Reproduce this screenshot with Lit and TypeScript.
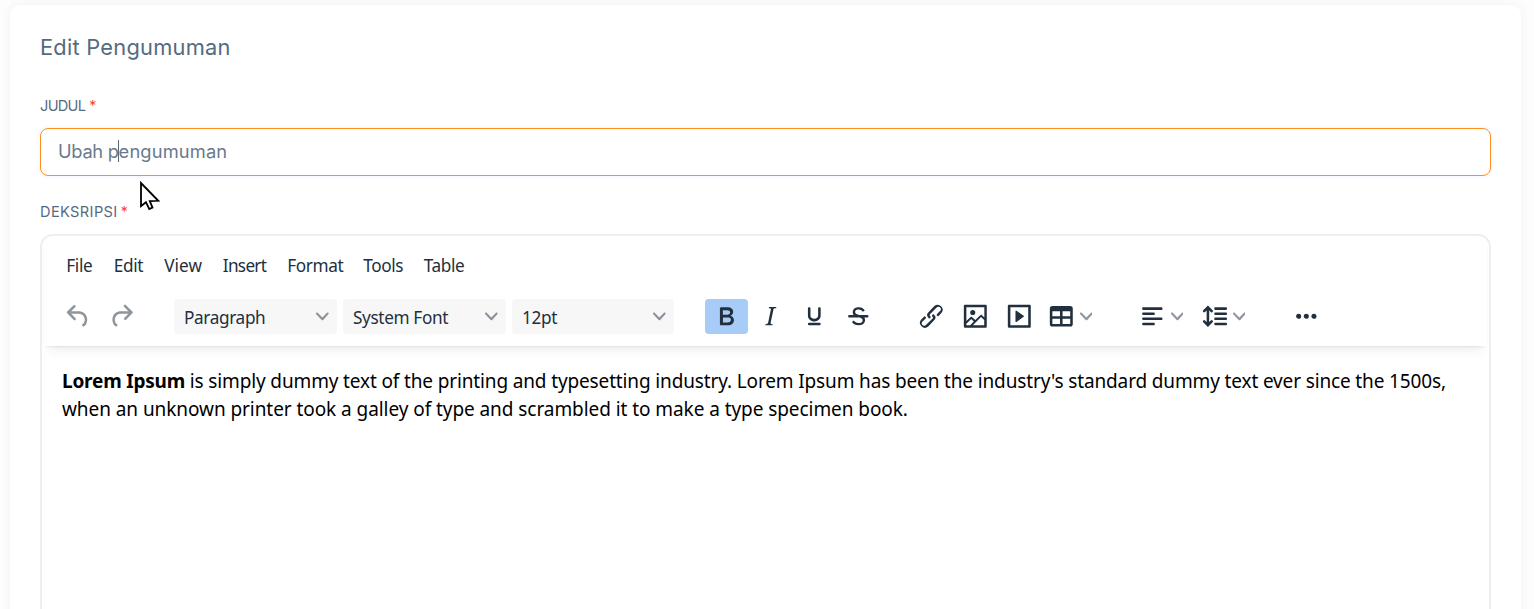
import { LitElement, html, css, svg } from "lit";
import { customElement } from "lit/decorators.js";

const paths: Record<string, string> = {
  undo: "M6.4 8H12c3.7 0 6.2 2 6.8 5.1.6 2.7-.4 5.6-2.3 6.8a1 1 0 0 1-1-1.8c1.1-.6 1.8-2.7 1.4-4.6-.5-2.1-2.1-3.5-4.9-3.5H6.4l3.3 3.3a1 1 0 1 1-1.4 1.4l-5-5a1 1 0 0 1 0-1.4l5-5a1 1 0 0 1 1.4 1.4L6.4 8Z",
  redo: "M17.6 10H12c-2.8 0-4.4 1.4-4.9 3.5-.4 2 .3 4 1.4 4.6a1 1 0 1 1-1 1.8c-2-1.2-2.9-4.1-2.3-6.8.6-3 3-5.1 6.8-5.1h5.6l-3.3-3.3a1 1 0 1 1 1.4-1.4l5 5a1 1 0 0 1 0 1.4l-5 5a1 1 0 0 1-1.4-1.4l3.3-3.3Z",
  bold: "M7.8 19c-.3 0-.5 0-.6-.2l-.2-.5V5.7c0-.2 0-.4.2-.5l.6-.2h5c1.5 0 2.7.3 3.5 1 .7.6 1.1 1.4 1.1 2.5a3 3 0 0 1-.6 1.9c-.4.6-1 1-1.6 1.2.4.1.9.3 1.3.6s.8.7 1 1.2c.4.4.5 1 .5 1.6 0 1.3-.4 2.3-1.3 3-.8.7-2.1 1-3.8 1H7.8Zm5-8.3c.6 0 1.2-.1 1.6-.5.4-.3.6-.7.6-1.3 0-1.1-.8-1.7-2.3-1.7H9.3v3.5h3.4Zm.5 6c.7 0 1.3-.1 1.7-.4.4-.4.6-.9.6-1.5s-.2-1-.7-1.4c-.4-.3-1-.4-2-.4H9.4v3.8h4Z",
  italic: "m16.7 4.7-.1.9h-.3c-.6 0-1 0-1.4.3-.3.3-.4.6-.5 1.1l-2.1 9.8v.6c0 .5.4.8 1.4.8h.2l-.2.8H8l.2-.8h.2c1.1 0 1.8-.5 2-1.5l2-9.8.1-.5c0-.6-.4-.8-1.4-.8h-.3l.2-.9h5.8Z",
  underline: "M16 5c.6 0 1 .4 1 1v5.5a4 4 0 0 1-.4 1.8l-1 1.4a5.3 5.3 0 0 1-5.5 1 5 5 0 0 1-1.6-1c-.5-.4-.8-.9-1.1-1.4a4 4 0 0 1-.4-1.8V6c0-.6.4-1 1-1s1 .4 1 1v5.5c0 .3 0 .6.2 1l.6.7a3.3 3.3 0 0 0 2.2.8 3.4 3.4 0 0 0 2.2-.8c.3-.2.4-.5.6-.8l.2-.9V6c0-.6.4-1 1-1ZM8 17h8c.6 0 1 .4 1 1s-.4 1-1 1H8a1 1 0 0 1 0-2Z",
  strike: "M15.6 8.5c-.5-.7-1-1.1-1.3-1.3-.6-.4-1.3-.6-2-.6-2.7 0-2.8 1.7-2.8 2.1 0 1.6 1.8 2 3.2 2.3 4.4.9 4.6 2.8 4.6 3.9 0 1.4-.7 4.1-5 4.1A6.2 6.2 0 0 1 7 16.4l1.5-1.1c.4.6 1.6 2 3.7 2 1.6 0 2.5-.4 3-1.2.4-.8.3-2-.8-2.6-.7-.4-1.6-.7-2.9-1-1-.2-3.9-.8-3.9-3.6C7.6 6 10.3 5 12.4 5c2.9 0 4.2 1.6 4.7 2.4l-1.5 1.1ZM5 11h14a1 1 0 0 1 0 2H5a1 1 0 0 1 0-2Z",
  link: "M6.2 12.3a1 1 0 0 1 1.4 1.4l-2 2a2 2 0 1 0 2.6 2.8l4.8-4.8a1 1 0 0 0 0-1.4 1 1 0 1 1 1.4-1.3 2.9 2.9 0 0 1 0 4L9.6 20a3.9 3.9 0 0 1-5.5-5.5l2-2Zm11.6-.6a1 1 0 0 1-1.4-1.4l2-2a2 2 0 1 0-2.6-2.8L11 10.3a1 1 0 0 0 0 1.4A1 1 0 1 1 9.6 13a2.9 2.9 0 0 1 0-4L14.4 4a3.9 3.9 0 0 1 5.5 5.5l-2 2Z",
  image: "m5 15.7 3.3-3.2c.3-.3.7-.3 1 0L12 15l4.1-4c.3-.4.8-.4 1 0l2 1.9V5H5v10.7ZM5 18V19h3l2.8-2.9-2-2L5 17.9Zm14-3-2.5-2.4-6.4 6.5H19v-4ZM4 3h16c.6 0 1 .4 1 1v16c0 .6-.4 1-1 1H4a1 1 0 0 1-1-1V4c0-.6.4-1 1-1Zm6 8a2 2 0 1 0 0-4 2 2 0 0 0 0 4Z",
  embed: "M4 3h16c.6 0 1 .4 1 1v16c0 .6-.4 1-1 1H4a1 1 0 0 1-1-1V4c0-.6.4-1 1-1Zm1 2v14h14V5H5Zm4.8 2.6 5.6 4a.5.5 0 0 1 0 .8l-5.6 4A.5.5 0 0 1 9 16V8a.5.5 0 0 1 .8-.4Z",
  table: "M19 4a2 2 0 0 1 2 2v12a2 2 0 0 1-2 2H5a2 2 0 0 1-2-2V6c0-1.1.9-2 2-2h14ZM5 14v4h6v-4H5Zm14 0h-6v4h6v-4Zm0-6h-6v4h6V8ZM5 12h6V8H5v4Z",
  align: "M5 5h14c.6 0 1 .4 1 1s-.4 1-1 1H5a1 1 0 1 1 0-2Zm0 4h8c.6 0 1 .4 1 1s-.4 1-1 1H5a1 1 0 1 1 0-2Zm0 8h8c.6 0 1 .4 1 1s-.4 1-1 1H5a1 1 0 0 1 0-2Zm0-4h14c.6 0 1 .4 1 1s-.4 1-1 1H5a1 1 0 0 1 0-2Z",
  lineHeight: "M21 5a1 1 0 0 1 .1 2H13a1 1 0 0 1-.1-2H21zm0 4a1 1 0 0 1 .1 2H13a1 1 0 0 1-.1-2H21zm0 4a1 1 0 0 1 .1 2H13a1 1 0 0 1-.1-2H21zm0 4a1 1 0 0 1 .1 2H13a1 1 0 0 1-.1-2H21zM7 3.6l3.7 3.7a1 1 0 0 1-1.3 1.5h-.1L8 7.3v9.2l1.3-1.3a1 1 0 0 1 1.3 0h.1c.4.4.4 1 0 1.3v.1L7 20.4l-3.7-3.7a1 1 0 0 1 1.3-1.5h.1L6 16.7V7.4L4.7 8.7a1 1 0 0 1-1.3 0h-.1a1 1 0 0 1 0-1.3v-.1L7 3.6z",
  more: "M6 10a2 2 0 0 0-2 2c0 1.1.9 2 2 2a2 2 0 0 0 2-2 2 2 0 0 0-2-2Zm12 0a2 2 0 0 0-2 2c0 1.1.9 2 2 2a2 2 0 0 0 2-2 2 2 0 0 0-2-2Zm-6 0a2 2 0 0 0-2 2c0 1.1.9 2 2 2a2 2 0 0 0 2-2 2 2 0 0 0-2-2Z",
};

const icon = (name: string) =>
  html`<svg class="icon" viewBox="0 0 24 24">${svg`<path fill-rule=${name === "strike" ? "nonzero" : "evenodd"} d=${paths[name]}></path>`}</svg>`;

const chevron = () =>
  html`<svg class="chevron" viewBox="0 0 10 10"><path d="M8.7 2.2c.3-.3.8-.3 1 0 .4.4.4.9 0 1.2L5.7 7.8c-.3.3-.9.3-1.2 0L.2 3.4a.8.8 0 0 1 0-1.2c.3-.3.8-.3 1.1 0L5 6l3.7-3.8Z"></path></svg>`;

const menus = ["File", "Edit", "View", "Insert", "Format", "Tools", "Table"];
const selects = ["Paragraph", "System Font", "12pt"];

@customElement("app-root")
export class AppRoot extends LitElement {
  static styles = css`
    :host { display: block; height: 609px; overflow: hidden; background: #fdfdfd; position: relative; }
    * { box-sizing: border-box; }
    .card { margin: 5px 13px 0 10px; height: 640px; padding: 28px 30px 0; background: #fff; border-radius: 10px;
      box-shadow: 0 0 10px rgba(67, 89, 113, .07); font-family: Inter, sans-serif; color: #566a7f; }
    h1 { margin: 0; font-size: 21.8px; line-height: 28px; font-weight: 400; letter-spacing: .26px; }
    label { display: flex; font-size: 14.6px; line-height: 20px; white-space: nowrap; }
    .judul { margin-top: 35px; letter-spacing: -.7px; }
    .judul .star { margin-left: 4px; }
    .deskripsi { margin-top: 26px; letter-spacing: .38px; }
    .deskripsi .star { margin-left: 3px; }
    .star { color: #ff3e1d; letter-spacing: 0; font-size: 14px; }
    .input { margin-top: 12px; height: 48px; border: 1px solid #fd8f1e; border-radius: 8px; padding: 0 17px 2px;
      display: flex; align-items: center; font-size: 18.3px; color: #697a8d; white-space: pre; letter-spacing: -.05px;
      box-shadow: 0 0 4px rgba(105, 108, 255, .1); }
    .caret { width: 1px; height: 22px; margin: 0 0 0 -1px; background: #566a7f; }
    .first { letter-spacing: -.3px; }
    .rest { letter-spacing: .14px; }
    .editor { margin-top: 12px; height: 460px; border: 2px solid #eee; border-radius: 13px; overflow: hidden;
      font-family: "Noto Sans", "Open Sans", sans-serif; color: #222f3e; }
    .head { height: 110px; margin: 0 2px; box-shadow: 0 2px 3px -2px rgba(34, 47, 62, .16), 0 8px 11px -5px rgba(34, 47, 62, .09); }
    .menu { display: grid; grid-template-columns: 47.5px 50.5px 58.5px 64.5px 76px 60.5px 60px; padding: 16px 0 0 22.3px;
      height: 46px; line-height: 28px; font-size: 17.2px; letter-spacing: -.38px; }
    .menu .wide { letter-spacing: 0; }
    .menu .tight { letter-spacing: -.7px; }
    .bar { display: flex; align-items: center; height: 35px; margin-top: 17px; padding-left: 13px; }
    .group { display: flex; align-items: center; margin-right: 30px; }
    .group.history, .group.selects { margin-right: 31px; }
    .group.selects { gap: 6px; }
    .group.marks, .group.media { gap: 1px; }
    .group.media { margin-right: 4.5px; }
    .btn { width: 43px; height: 35px; flex: none; display: flex; align-items: center; justify-content: center; border-radius: 4px; }
    .btn.on { background: #a6ccf7; }
    .btn.dim { opacity: .5; }
    .split { display: flex; align-items: center; gap: 3.5px; }
    .split.table { margin-right: 44.3px; }
    .split.align { margin-right: 15.2px; }
    .split.height { margin-right: 46px; }
    .icon { width: 30.6px; height: 30.6px; fill: #222f3e; flex: none; }
    .chevron { width: 12.7px; height: 12.7px; fill: #222f3e; opacity: .5; flex: none; }
    .select { width: 163px; height: 35px; padding: 0 8.5px 0 10px; background: #f7f7f7; border-radius: 4px;
      display: flex; align-items: center; justify-content: space-between; font-size: 17.2px; letter-spacing: -.36px; }
    .select:last-child { width: 162px; padding-right: 8px; }
    .select span { padding-top: 1px; }
    .body { padding: 21px 20px 0; font-size: 19px; line-height: 28px; color: #000; white-space: pre; }
    .body b { letter-spacing: -.2px; }
    .body .one { letter-spacing: -.14px; }
    .body .two { letter-spacing: -.066px; }
    .cursor { position: absolute; left: 139px; top: 180px; width: 24px; height: 32px; }
  `;

  render() {
    return html`
      <div class="card">
        <h1>Edit Pengumuman</h1>
        <label class="judul">JUDUL<span class="star">*</span></label>
        <div class="input"><span class="first">Ubah p</span><i class="caret"></i><span class="rest">engumuman</span></div>
        <label class="deskripsi">DEKSRIPSI<span class="star">*</span></label>
        <div class="editor">
          <div class="head">
            <div class="menu">
              ${menus.map((t) => html`<span class=${t === "View" ? "wide" : t === "Insert" ? "tight" : ""}>${t}</span>`)}
            </div>
            <div class="bar">
              <div class="group history">
                <span class="btn dim">${icon("undo")}</span><span class="btn dim">${icon("redo")}</span>
              </div>
              <div class="group selects">
                ${selects.map((t) => html`<div class="select"><span>${t}</span>${chevron()}</div>`)}
              </div>
              <div class="group marks">
                <span class="btn on">${icon("bold")}</span>
                ${["italic", "underline", "strike"].map((n) => html`<span class="btn">${icon(n)}</span>`)}
              </div>
              <div class="group media">
                ${["link", "image", "embed"].map((n) => html`<span class="btn">${icon(n)}</span>`)}
              </div>
              <div class="split table">${icon("table")}${chevron()}</div>
              <div class="split align">${icon("align")}${chevron()}</div>
              <div class="split height">${icon("lineHeight")}${chevron()}</div>
              ${icon("more")}
            </div>
          </div>
          <div class="body"><b>Lorem Ipsum</b><span class="one"> is simply dummy text of the printing and typesetting industry. Lorem Ipsum has been the industry's standard dummy text ever since the 1500s,</span><br /><span class="two">when an unknown printer took a galley of type and scrambled it to make a type specimen book.</span></div>
        </div>
      </div>
      <svg class="cursor" viewBox="0 0 24 32">
        <path d="M2 3V26.2L6.9 22.2L10.3 29L13.5 27.6L10.8 21.2L19.3 20.8Z" fill="#fff" stroke="#000" stroke-width="1.8"></path>
      </svg>`;
  }
}
